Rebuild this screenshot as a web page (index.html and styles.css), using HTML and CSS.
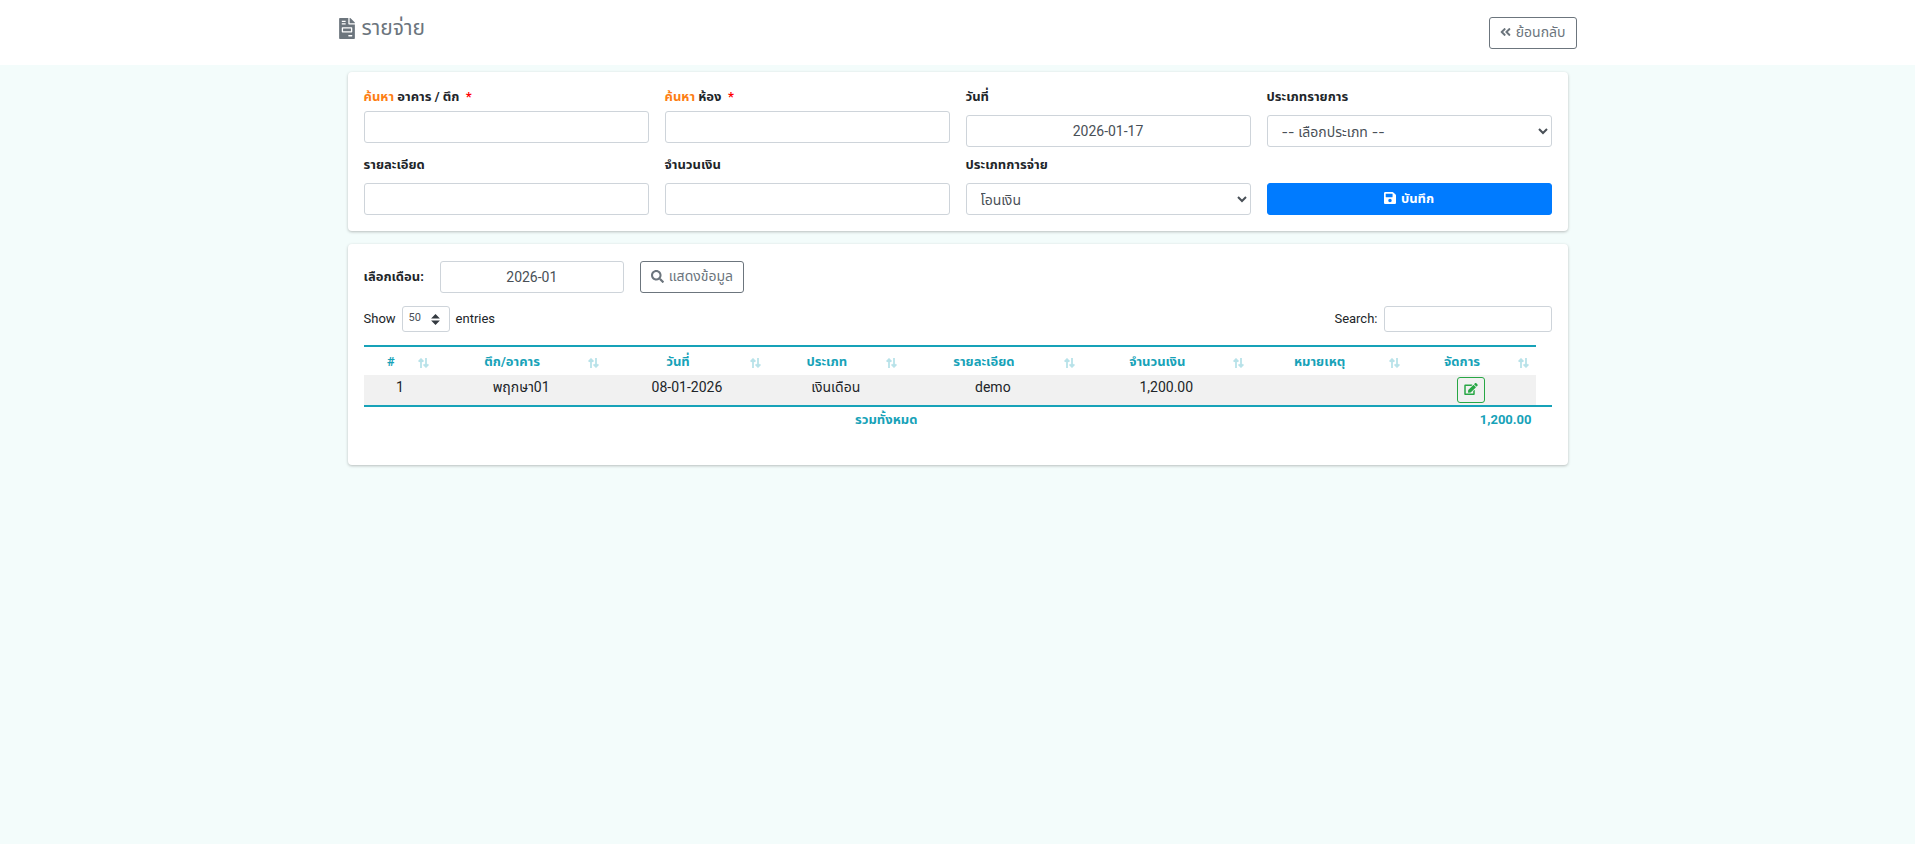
FILE: index.html
```html
<!DOCTYPE html>
<html lang="th">
<head>
<meta charset="utf-8">
<meta name="viewport" content="width=device-width, initial-scale=1">
<title>รายจ่าย</title>
<link rel="stylesheet" href="styles.css">
</head>
<body>
<svg class="sprite" aria-hidden="true">
  <symbol id="i-sort" viewBox="0 0 11 10"><path d="M3 10V1.2M.6 3.6 3 1.2l2.4 2.4M8 0v8.8M5.6 6.4 8 8.8l2.4-2.4" fill="none" stroke="currentColor" stroke-width="1.8"/></symbol>
</svg>
<header class="topbar">
  <div class="topbar-inner">
    <h1 class="title">
      <svg class="title-icon" viewBox="0 0 384 512" aria-hidden="true"><path d="M288 256H96v64h192v-64zm89-151L279.1 7c-4.5-4.5-10.6-7-17-7H256v128h128v-6.1c0-6.3-2.5-12.4-7-16.9zm-153 31V0H24C10.7 0 0 10.7 0 24v464c0 13.3 10.7 24 24 24h336c13.3 0 24-10.7 24-24V160H248c-13.2 0-24-10.8-24-24zM64 72c0-4.42 3.58-8 8-8h80c4.42 0 8 3.58 8 8v16c0 4.42-3.58 8-8 8H72c-4.42 0-8-3.58-8-8V72zm0 64c0-4.42 3.58-8 8-8h80c4.42 0 8 3.58 8 8v16c0 4.42-3.58 8-8 8H72c-4.42 0-8-3.58-8-8v-16zm256 304c0 4.42-3.58 8-8 8h-80c-4.42 0-8-3.58-8-8v-16c0-4.42 3.58-8 8-8h80c4.42 0 8 3.58 8 8v16zm0-200v96c0 8.84-7.16 16-16 16H80c-8.84 0-16-7.16-16-16v-96c0-8.84 7.16-16 16-16h224c8.84 0 16 7.16 16 16z"/></svg>
      <span>รายจ่าย</span>
    </h1>
    <button type="button" class="btn btn-outline">
      <svg class="icon-back" viewBox="0 0 448 512" aria-hidden="true"><path d="M223.7 239l136-136c9.4-9.4 24.6-9.4 33.9 0l22.6 22.6c9.4 9.4 9.4 24.6 0 33.9L319.9 256l96.4 96.4c9.4 9.4 9.4 24.6 0 33.9L393.7 409c-9.4 9.4-24.6 9.4-33.9 0l-136-136c-9.5-9.4-9.5-24.6-.1-34zm-192 34l136 136c9.4 9.4 24.6 9.4 33.9 0l22.6-22.6c9.4-9.4 9.4-24.6 0-33.9L127.9 256l96.4-96.4c9.4-9.4 9.4-24.6 0-33.9L201.7 103c-9.4-9.4-24.6-9.4-33.9 0l-136 136c-9.5 9.4-9.5 24.6-.1 34z"/></svg>
      <span>ย้อนกลับ</span>
    </button>
  </div>
</header>

<main class="page">
  <form class="card form-grid">
    <div class="field field-tight">
      <label for="building"><span class="find">ค้นหา</span> อาคาร / ตึก &nbsp;<span class="required">*</span></label>
      <input class="control" id="building" type="text">
    </div>
    <div class="field field-tight">
      <label for="room"><span class="find">ค้นหา</span> ห้อง &nbsp;<span class="required">*</span></label>
      <input class="control" id="room" type="text">
    </div>
    <div class="field">
      <label for="date">วันที่</label>
      <input class="control centered" id="date" type="text" value="2026-01-17">
    </div>
    <div class="field">
      <label for="kind">ประเภทรายการ</label>
      <select class="control" id="kind"><option>-- เลือกประเภท --</option></select>
    </div>
    <div class="field">
      <label for="detail">รายละเอียด</label>
      <input class="control" id="detail" type="text">
    </div>
    <div class="field">
      <label for="amount">จำนวนเงิน</label>
      <input class="control" id="amount" type="text">
    </div>
    <div class="field">
      <label for="payment">ประเภทการจ่าย</label>
      <select class="control" id="payment"><option>โอนเงิน</option></select>
    </div>
    <div class="field field-action">
      <button type="button" class="btn btn-primary">
        <svg class="icon-save" viewBox="0 0 448 512" aria-hidden="true"><path d="M433.941 129.941l-83.882-83.882A48 48 0 0 0 316.118 32H48C21.49 32 0 53.49 0 80v352c0 26.51 21.49 48 48 48h352c26.51 0 48-21.49 48-48V163.882a48 48 0 0 0-14.059-33.941zM224 416c-35.346 0-64-28.654-64-64 0-35.346 28.654-64 64-64s64 28.654 64 64c0 35.346-28.654 64-64 64zm96-304.52V212c0 6.627-5.373 12-12 12H76c-6.627 0-12-5.373-12-12V108c0-6.627 5.373-12 12-12h228.52c3.183 0 6.235 1.264 8.485 3.515l3.48 3.48A11.996 11.996 0 0 1 320 111.48z"/></svg>
        <span>บันทึก</span>
      </button>
    </div>
  </form>

  <section class="card report">
    <div class="month-row">
      <label class="month-label" for="month">เลือกเดือน:</label>
      <input class="control centered month" id="month" type="text" value="2026-01">
      <button type="button" class="btn btn-outline">
        <svg class="icon-search" viewBox="0 0 512 512" aria-hidden="true"><path d="M505 442.7L405.3 343c-4.5-4.5-10.6-7-17-7H372c27.6-35.3 44-79.7 44-128C416 93.1 322.9 0 208 0S0 93.1 0 208s93.1 208 208 208c48.3 0 92.7-16.4 128-44v16.3c0 6.4 2.5 12.5 7 17l99.7 99.7c9.4 9.4 24.6 9.4 33.9 0l28.3-28.3c9.4-9.4 9.4-24.6.1-34zM208 336c-70.7 0-128-57.2-128-128 0-70.7 57.2-128 128-128 70.7 0 128 57.2 128 128 0 70.7-57.2 128-128 128z"/></svg>
        <span>แสดงข้อมูล</span>
      </button>
    </div>
    <div class="table-tools">
      <label class="tool">Show <select class="length"><option>50</option></select> entries</label>
      <label class="tool">Search: <input class="search" type="search"></label>
    </div>
    <div class="table-scroll">
      <table class="data">
        <colgroup><col class="c1"><col class="c2"><col class="c3"><col class="c4"><col class="c5"><col class="c6"><col class="c7"><col class="c8"></colgroup>
        <thead>
          <tr>
            <th><span class="th">#<svg class="sort"><use href="#i-sort"/></svg></span></th>
            <th><span class="th">ตึก/อาคาร<svg class="sort"><use href="#i-sort"/></svg></span></th>
            <th><span class="th">วันที่<svg class="sort"><use href="#i-sort"/></svg></span></th>
            <th><span class="th">ประเภท<svg class="sort"><use href="#i-sort"/></svg></span></th>
            <th><span class="th">รายละเอียด<svg class="sort"><use href="#i-sort"/></svg></span></th>
            <th><span class="th">จำนวนเงิน<svg class="sort"><use href="#i-sort"/></svg></span></th>
            <th><span class="th">หมายเหตุ<svg class="sort"><use href="#i-sort"/></svg></span></th>
            <th><span class="th">จัดการ<svg class="sort"><use href="#i-sort"/></svg></span></th>
          </tr>
        </thead>
        <tbody>
          <tr>
            <td>1</td>
            <td>พฤกษา01</td>
            <td>08-01-2026</td>
            <td>เงินเดือน</td>
            <td>demo</td>
            <td>1,200.00</td>
            <td></td>
            <td>
              <button type="button" class="btn-edit" aria-label="แก้ไข">
                <svg class="icon-edit" viewBox="0 0 576 512" aria-hidden="true"><path d="M402.6 83.2l90.2 90.2c3.8 3.8 3.8 10 0 13.8L274.4 405.6l-92.8 10.3c-12.4 1.4-22.9-9.1-21.5-21.5l10.3-92.8L388.8 83.2c3.8-3.8 10-3.8 13.8 0zm162-22.9l-48.8-48.8c-15.2-15.2-39.9-15.2-55.2 0l-35.4 35.4c-3.8 3.8-3.8 10 0 13.8l90.2 90.2c3.8 3.8 10 3.8 13.8 0l35.4-35.4c15.2-15.3 15.2-40 0-55.2zM384 346.2V448H64V128h229.8c3.2 0 6.2-1.3 8.5-3.5l40-40c7.6-7.6 2.2-20.5-8.5-20.5H48C21.5 64 0 85.5 0 112v352c0 26.5 21.5 48 48 48h352c26.5 0 48-21.5 48-48V306.2c0-10.7-12.9-16-20.5-8.5l-40 40c-2.2 2.3-3.5 5.3-3.5 8.5z"/></svg>
              </button>
            </td>
          </tr>
        </tbody>
      </table>
    </div>
    <table class="totals">
      <tbody>
        <tr><th scope="row">รวมทั้งหมด</th><td>1,200.00</td></tr>
      </tbody>
    </table>
  </section>
</main>
</body>
</html>
```
FILE: styles.css
```css
* {
  box-sizing: border-box;
}

body {
  margin: 0;
  background: #f3fcfb;
  color: #212529;
  font-family: Roboto, "Noto Sans", "Noto Sans Thai", sans-serif;
  font-size: 14px;
  line-height: 21px;
}

button,
input,
select {
  font: inherit;
}

svg {
  fill: currentColor;
  flex: none;
}

.sprite {
  display: none;
}

.topbar {
  background: #fff;
}

.topbar-inner {
  display: flex;
  justify-content: space-between;
  align-items: flex-start;
  max-width: 1238px;
  margin: 0 auto;
  padding: 17px 0 16px;
}

.title {
  display: flex;
  align-items: center;
  gap: 7px;
  margin: 0;
  color: #6c757d;
  font-size: 21px;
  font-weight: 400;
  line-height: 22px;
}

.title-icon {
  width: 16px;
  height: 21px;
}

.btn {
  display: inline-flex;
  align-items: center;
  justify-content: center;
  gap: 5px;
  height: 32px;
  padding: 0 10px 2px;
  border: 1px solid;
  border-radius: 3px;
}

.btn-outline {
  background: #fff;
  border-color: #6c757d;
  color: #6c757d;
}

.btn-primary {
  width: 100%;
  background: #007bff;
  border-color: #007bff;
  color: #fff;
  font-size: 13px;
  font-weight: 700;
}

.icon-back {
  width: 11px;
  height: 14px;
}

.icon-save {
  width: 12px;
  height: 14px;
}

.icon-search {
  width: 13px;
  height: 13px;
}

.page {
  display: grid;
  gap: 13px;
  max-width: 1220px;
  margin: 0 auto;
  padding: 7px 0;
}

.card {
  padding: 16px;
  background: #fff;
  border-radius: 4px;
  box-shadow: 0 1px 3px rgba(0, 0, 0, 0.25);
}

.form-grid {
  display: grid;
  grid-template-columns: repeat(4, 1fr);
  gap: 8px 16px;
  padding-top: 15px;
}

.report {
  padding-top: 17px;
}

.field {
  display: flex;
  flex-direction: column;
  gap: 8px;
}

.field-tight {
  gap: 4px;
}

.field-action {
  justify-content: flex-end;
}

label {
  font-size: 13px;
  line-height: 20px;
}

.field label,
.month-label {
  font-weight: 700;
}

.find {
  color: #fd7e14;
}

.required {
  color: #f00;
}

.control {
  width: 100%;
  height: 32px;
  padding: 4px 8px;
  background: #fff;
  border: 1px solid #ced4da;
  border-radius: 3px;
  color: #495057;
  font-size: 14px;
}

select.control {
  padding: 4px 0 4px 10px;
  font-family: Inter, "Noto Sans Thai", sans-serif;
}

.centered {
  text-align: center;
}

.month-row {
  display: flex;
  align-items: center;
  gap: 16px;
}

.month {
  width: 184px;
}

.table-tools {
  display: flex;
  justify-content: space-between;
  padding: 13px 0;
}

.tool {
  display: flex;
  align-items: center;
  gap: 6px;
}

.length,
.search {
  height: 26px;
  border: 1px solid #ced4da;
  border-radius: 3px;
  background: #fff;
  color: #495057;
}

.length {
  width: 48px;
  padding: 0 6px 2px;
  appearance: none;
  background: #fff url("data:image/svg+xml,%3Csvg xmlns='http://www.w3.org/2000/svg' viewBox='0 0 4 5'%3E%3Cpath fill='%23343a40' d='M2 0L0 2h4zm0 5L0 3h4z'/%3E%3C/svg%3E") no-repeat right 9px center / 9px 11px;
  font-size: 11px;
}

.search {
  width: 168px;
}

.table-scroll {
  padding-right: 16px;
}

.data,
.totals {
  width: 100%;
  table-layout: fixed;
  border-collapse: separate;
  border-spacing: 0;
}

.c1 { width: 6.2%; }
.c2 { width: 14.5%; }
.c3 { width: 13.8%; }
.c4 { width: 11.6%; }
.c5 { width: 15.2%; }
.c6 { width: 14.4%; }
.c7 { width: 13.3%; }
.c8 { width: 11%; }

.data th {
  height: 30px;
  padding: 0 7px 0 0;
  border-top: 2px solid #17a2b8;
  color: #17a2b8;
  font-size: 13px;
  font-weight: 700;
  vertical-align: top;
}

.th {
  display: grid;
  grid-template-columns: 1fr 11px;
  align-items: center;
  height: 28px;
}

.sort {
  width: 11px;
  height: 10px;
  margin-top: 4px;
  opacity: 0.3;
}

.data td {
  height: 30px;
  padding: 2px 0;
  background: #f1f1f1;
  text-align: center;
  vertical-align: top;
}

.btn-edit {
  display: inline-flex;
  align-items: center;
  justify-content: center;
  width: 28px;
  height: 26px;
  padding: 0 0 2px;
  background: transparent;
  border: 1px solid #28a745;
  border-radius: 3px;
  color: #28a745;
  vertical-align: top;
}

.icon-edit {
  width: 14px;
  height: 12px;
}

.totals {
  margin-bottom: 12px;
}

.totals th,
.totals td {
  height: 32px;
  padding: 2px 20px 7px 0;
  border-top: 2px solid #17a2b8;
  color: #17a2b8;
  font-size: 13px;
  font-weight: 700;
  text-align: right;
}

.totals th {
  width: 88%;
  padding-right: 0;
  text-align: center;
}
```
